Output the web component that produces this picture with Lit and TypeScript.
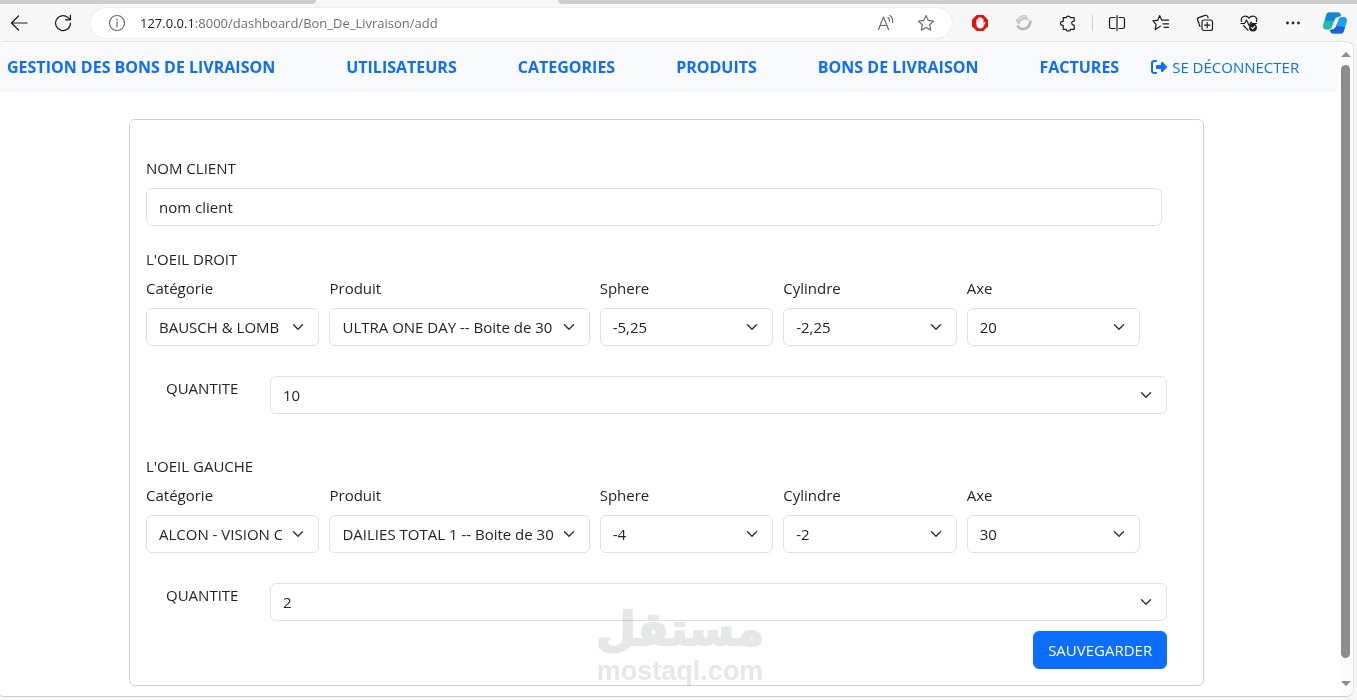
import { LitElement, html, css, svg } from "lit";
import { customElement } from "lit/decorators.js";

interface Field {
  id: string;
  label: string;
  value: string;
}

interface Eye {
  id: string;
  title: string;
  fields: Field[];
  quantity: string;
}

const LINKS = ["UTILISATEURS", "CATEGORIES", "PRODUITS", "BONS DE LIVRAISON", "FACTURES"];

const EYES: Eye[] = [
  {
    id: "droit",
    title: "L'OEIL DROIT",
    fields: [
      { id: "categorie", label: "Catégorie", value: "BAUSCH & LOMB" },
      { id: "produit", label: "Produit", value: "ULTRA ONE DAY -- Boite de 30" },
      { id: "sphere", label: "Sphere", value: "-5,25" },
      { id: "cylindre", label: "Cylindre", value: "-2,25" },
      { id: "axe", label: "Axe", value: "20" },
    ],
    quantity: "10",
  },
  {
    id: "gauche",
    title: "L'OEIL GAUCHE",
    fields: [
      { id: "categorie", label: "Catégorie", value: "ALCON - VISION CARE" },
      { id: "produit", label: "Produit", value: "DAILIES TOTAL 1 -- Boite de 30" },
      { id: "sphere", label: "Sphere", value: "-4" },
      { id: "cylindre", label: "Cylindre", value: "-2" },
      { id: "axe", label: "Axe", value: "30" },
    ],
    quantity: "2",
  },
];

const icons = {
  back: svg`<path d="M18 10H2.5M9.5 3L2.5 10l7 7"/>`,
  reload: svg`<path d="M17.5 10.2A7.5 7.5 0 1 1 14.8 4.4L17.3 6.6M17.4 2v4.8h-4.8"/>`,
  info: svg`<circle cx="10" cy="10" r="7.5"/><path d="M10 9v5M10 6v1.2"/>`,
  aloud: svg`<path d="M2.5 16.5L7.5 4l5 12.5M4.2 12.5h6.6M12 4.5a4.5 4.5 0 0 1 1.6 4M14 2.5a7.5 7.5 0 0 1 2.6 7"/>`,
  star: svg`<path d="M10 2.5l2.3 4.9 5.3.7-3.9 3.7 1 5.3-4.7-2.6-4.7 2.6 1-5.3-3.9-3.7 5.3-.7z"/>`,
  puzzle: svg`<path d="M5.200 4.600h3a2.200 2.200 0 0 1 4.200 0h3.800v3.600c-3.200-.5-3.400 4.200 0 3.900v4.300h-3.700c0 2-4.300 2-4.300 0h-3v-4c-3.700.2-3.700-4.200 0-4z"/>`,
  split: svg`<path d="M8 4.5H4.2a1.7 1.7 0 0 0-1.7 1.7v7.6c0 1 .7 1.7 1.7 1.7H8M12 4.5h3.8c1 0 1.7.7 1.7 1.7v7.6c0 1-.7 1.7-1.7 1.7H12M10 2.5v15"/>`,
  favs: svg`<path d="M9.500 13.300L8.200 14l-4 2.600.9-5.200L2 7.900l4.800-.7L8.600 2.600l2.200 4.600h6.700M12 10.800h5.500M13 14.400h4.500"/>`,
  collections: svg`<rect x="7" y="7" width="10.5" height="10.5" rx="2"/><path d="M12.2 9.6v5.2M9.6 12.2h5.2M5 13.5L2.7 7.2a2 2 0 0 1 1-2.6l6.4-2.2c1-.4 2.1.1 2.5 1.100l.5 1.200"/>`,
  heart: svg`<path d="M2.600 8.500C1 4 6.500 1 10 5 13.500 1 19 4 17.400 8.500M2 10.500h3.500L7.500 7l2.600 5.500 2-3.500 1 1.500h4.500M4.500 12.500l4.500 4.700"/><circle cx="14" cy="14.600" r="3.300" fill="#222"/><path d="M12.500 14.700l1.100 1.100 2.100-2.300" stroke="#f7f7f7"/>`,
};

const glyph = (shape: unknown) =>
  html`<svg class="glyph" viewBox="0 0 20 20" aria-hidden="true">${shape}</svg>`;

@customElement("browser-toolbar")
export class BrowserToolbar extends LitElement {
  static styles = css`
    :host {
      display: block;
      background: #f7f7f7;
      font-family: "Open Sans", "Noto Sans", sans-serif;
      color: #1b1b1b;
    }
    .tabs {
      display: grid;
      grid-template-columns: 316px 242px 1fr;
      height: 4px;
    }
    .tab {
      background: #cdcdcd;
    }
    .tab-left {
      border-bottom-right-radius: 4px;
    }
    .tab-right {
      grid-column: 3;
      border-bottom-left-radius: 4px;
    }
    .bar {
      display: flex;
      align-items: center;
      height: 37px;
      box-sizing: border-box;
      padding-right: 2px;
    }
    .cell {
      display: flex;
      align-items: center;
      justify-content: center;
      width: 44px;
      height: 30px;
      padding: 0;
      border: 0;
      background: none;
      flex: none;
      color: inherit;
    }
    .edge {
      width: 40px;
    }
    .first {
      width: 38px;
      margin-right: 3px;
    }
    .inner {
      width: 40px;
      color: #6b6b6b;
    }
    .glyph {
      width: 20px;
      height: 20px;
      fill: none;
      stroke: currentColor;
      stroke-width: 1.2;
      stroke-linejoin: round;
      stroke-linecap: round;
    }
    .address {
      flex: 1;
      min-width: 0;
      display: flex;
      align-items: center;
      height: 30px;
      margin: 0 6px;
      padding: 0 6px;
      border-radius: 15px;
      background: #fff;
      box-shadow: 0 0 2px #ddd;
      box-sizing: border-box;
    }
    .url {
      flex: 1;
      min-width: 0;
      padding-left: 3px;
      overflow: hidden;
      white-space: nowrap;
      font-size: 13px;
      line-height: 20px;
      color: #6f6f6f;
    }
    .host {
      color: #1b1b1b;
    }
    .divider {
      width: 1px;
      height: 16px;
      margin: 0 2px;
      background: #cfcfcf;
    }
    .color {
      width: 20px;
      height: 20px;
    }
    .copilot {
      width: 26px;
      height: 24px;
    }
  `;

  render() {
    return html`
      <div class="tabs"><div class="tab tab-left"></div><div class="tab tab-right"></div></div>
      <div class="bar">
        <button class="cell first" aria-label="Retour">${glyph(icons.back)}</button>
        <button class="cell" aria-label="Actualiser">${glyph(icons.reload)}</button>
        <div class="address">
          <button class="cell inner" aria-label="Informations">${glyph(icons.info)}</button>
          <div class="url"><span class="host">127.0.0.1</span>:8000/dashboard/Bon_De_Livraison/add</div>
          <button class="cell inner" aria-label="Lecture">${glyph(icons.aloud)}</button>
          <button class="cell inner" aria-label="Favori">${glyph(icons.star)}</button>
        </div>
        <button class="cell" aria-label="Bloqueur">
          <svg class="color" viewBox="0 0 20 20">
            <path d="M6.700 2h6.600L18 6.700v6.600L13.300 18H6.700L2 13.300V6.700z" fill="#e1140c" />
            <path d="M7.200 10.500V7M9 10V5.200M10.900 10V5M12.600 10.500V6.400" stroke="#fff" stroke-width="1.700" stroke-linecap="round" />
            <path d="M6.400 9.500h7v1l1-1.300c.7-.5 1.300.1.900.8l-2.100 3.900c-1.400 2.200-4.800 2-6 .2-.9-1.400-.8-3.100-.8-4.600z" fill="#fff" />
          </svg>
        </button>
        <button class="cell" aria-label="Extension">
          <svg class="color" viewBox="0 0 20 20" fill="none">
            <path d="M2.500 9C3 4.500 8 1.500 13 3M4 10.500C4 6.500 8.500 3.800 13 4.600" stroke="#c3c7c8" stroke-width="1.300" />
            <path d="M5 11c0-4 5-6.500 9.500-4.500" stroke="#c3c7c8" stroke-width="1.600" />
            <path d="M3.500 12.500c2.500 5.500 12.500 5 13-5" stroke="#b4b9ba" stroke-width="2.600" />
          </svg>
        </button>
        <button class="cell" aria-label="Extensions">${glyph(icons.puzzle)}</button>
        <div class="divider"></div>
        <button class="cell" aria-label="Écran partagé">${glyph(icons.split)}</button>
        <button class="cell" aria-label="Favoris">${glyph(icons.favs)}</button>
        <button class="cell" aria-label="Collections">${glyph(icons.collections)}</button>
        <button class="cell" aria-label="Performances">${glyph(icons.heart)}</button>
        <button class="cell" aria-label="Plus">
          <svg class="color" viewBox="0 0 20 20" fill="#222">
            <circle cx="4.500" cy="10" r="1.400" /><circle cx="10" cy="10" r="1.400" /><circle cx="15.500" cy="10" r="1.400" />
          </svg>
        </button>
        <button class="cell edge" aria-label="Copilot">
          <svg class="copilot" viewBox="0 0 26 24">
            <path d="M7 1.500h9c2 0 2.500 1.500 3 3.500l-5 2-4 9c-.8 2-2 2.500-4 2.500H4c-3 0-3.500-3-2.500-6L4 4.500c.5-2 1.500-3 3-3z" fill="#2ab7b0" />
            <path d="M7 1.500h9c2 0 2.500 1.500 3 3.500l-5 1-2 4H3l1.200-5.500c.5-2 1.300-3 2.800-3z" fill="#1684dc" />
            <path d="M19 22.500h-8c-2 0-2.500-1.500-3-3.500l4-1 4-9c.8-2 2-3 4-3h2c3 0 3.500 3 2.500 6L22 19.500c-.5 2-1.500 3-3 3z" fill="#18a1f4" />
            <path d="M19 22.500h-8c-2 0-2.500-1.500-3-3.500l4-1 1.500-3 9.500 1-1 3.500c-.5 2-1.500 3-3 3z" fill="#1b5fdc" />
            <path d="M13.500 7.500H17L13 17H9.500z" fill="#fff" />
          </svg>
        </button>
      </div>
    `;
  }
}

@customElement("delivery-form")
export class DeliveryForm extends LitElement {
  static styles = css`
    :host {
      display: block;
      font-family: "Open Sans", "Noto Sans", sans-serif;
      font-size: 15px;
      line-height: 24px;
      color: #212529;
    }
    .card {
      border: 1px solid #cfd0d1;
      border-radius: 6px;
      padding: 36px 16px 16px;
      background: #fff;
    }
    .label {
      display: block;
      margin-bottom: 8px;
    }
    .client {
      margin-right: 25px;
      margin-bottom: 21px;
    }
    .control {
      display: block;
      width: 100%;
      min-width: 0;
      height: 38px;
      box-sizing: border-box;
      margin: 0;
      padding: 6px 12px;
      border: 1px solid #dee2e6;
      border-radius: 6px;
      background-color: #fff;
      color: inherit;
      font: inherit;
    }
    .select {
      appearance: none;
      padding-right: 36px;
      background-image: url("data:image/svg+xml,%3Csvg xmlns='http://www.w3.org/2000/svg' viewBox='0 0 16 16'%3E%3Cpath fill='none' stroke='%23343a40' stroke-linecap='round' stroke-linejoin='round' stroke-width='2' d='m2 5 6 6 6-6'/%3E%3C/svg%3E");
      background-repeat: no-repeat;
      background-position: right 12px center;
      background-size: 16px 12px;
    }
    .title {
      margin: 0 0 5px;
    }
    .fields {
      display: grid;
      grid-template-columns: 2fr 3fr 2fr 2fr 2fr;
      gap: 10px;
      margin: 0 47px 30px 0;
    }
    .field {
      min-width: 0;
    }
    .quantity {
      display: grid;
      grid-template-columns: 104px 1fr;
      margin: 0 20px 40px;
    }
    .quantity-last {
      margin-bottom: 10px;
    }
    .actions {
      display: flex;
      justify-content: flex-end;
      margin-right: 20px;
    }
    .save {
      height: 38px;
      padding: 6px 14px;
      border: 1px solid #0d6efd;
      border-radius: 6px;
      background: #0d6efd;
      color: #fff;
      font: inherit;
    }
  `;

  private renderEye(eye: Eye, last: boolean) {
    return html`
      <section aria-labelledby="titre-${eye.id}">
        <p class="title" id="titre-${eye.id}">${eye.title}</p>
        <div class="fields">
          ${eye.fields.map(
            (f) => html`
              <div class="field">
                <label class="label" for="${f.id}-${eye.id}">${f.label}</label>
                <select class="control select" id="${f.id}-${eye.id}">
                  <option>${f.value}</option>
                </select>
              </div>
            `
          )}
        </div>
        <div class="quantity ${last ? "quantity-last" : ""}">
          <label for="quantite-${eye.id}">QUANTITE</label>
          <select class="control select" id="quantite-${eye.id}">
            <option>${eye.quantity}</option>
          </select>
        </div>
      </section>
    `;
  }

  render() {
    return html`
      <form class="card" @submit=${(e: Event) => e.preventDefault()}>
        <div class="client">
          <label class="label" for="client">NOM CLIENT</label>
          <input class="control" id="client" type="text" value="nom client" />
        </div>
        ${EYES.map((eye, i) => this.renderEye(eye, i === EYES.length - 1))}
        <div class="actions"><button class="save" type="submit">SAUVEGARDER</button></div>
      </form>
    `;
  }
}

@customElement("app-root")
export class AppRoot extends LitElement {
  static styles = css`
    :host {
      display: block;
      min-height: 100vh;
      background: #f7f7f7;
      font-family: "Open Sans", "Noto Sans", sans-serif;
      font-size: 15px;
      line-height: 24px;
    }
    .window {
      display: flex;
      margin-right: 3px;
      border: 1px solid #e2e2e2;
      border-left: 0;
      border-bottom-color: #cccccc;
      border-radius: 4px 8px 8px 4px;
      background: #fff;
      overflow: hidden;
    }
    .page {
      flex: 1;
      min-width: 0;
      position: relative;
    }
    .navbar {
      display: flex;
      align-items: center;
      height: 50px;
      padding-left: 7px;
      background: #f8f9fb;
      white-space: nowrap;
    }
    .link {
      color: #0d6efd;
      text-decoration: none;
      font-size: 16px;
      font-weight: 700;
      margin-right: 61px;
    }
    .brand {
      margin-right: 71px;
    }
    .last {
      margin-right: 32px;
    }
    .logout {
      display: flex;
      align-items: center;
      gap: 5px;
      color: #0d6efd;
      text-decoration: none;
    }
    .logout-icon {
      width: 16px;
      height: 16px;
      fill: currentColor;
    }
    .form {
      margin: 27px 10% 10px 129px;
    }
    .scrollbar {
      display: flex;
      flex-direction: column;
      align-items: center;
      gap: 8px;
      width: 15px;
      padding: 10px 0;
      background: #fcfcfc;
      box-sizing: border-box;
    }
    .arrow {
      width: 10px;
      height: 5px;
      fill: #8b8b8b;
    }
    .thumb {
      flex: 1;
      width: 9px;
      border-radius: 5px;
      background: #8b8b8b;
    }
    .arrow-down {
      margin-top: 15px;
    }
    .watermark {
      position: absolute;
      left: 596px;
      bottom: 10px;
      display: flex;
      flex-direction: column;
      align-items: center;
      color: #e6e7e7;
      mix-blend-mode: multiply;
      pointer-events: none;
      font-weight: 700;
      white-space: nowrap;
    }
    .arabic {
      font-family: "DejaVu Sans", sans-serif;
      font-size: 46px;
      line-height: 54px;
      -webkit-text-stroke: 2px #e6e7e7;
    }
    .latin {
      font-family: "Liberation Sans", Arial, sans-serif;
      font-size: 27px;
      line-height: 30px;
    }
  `;

  render() {
    return html`
      <browser-toolbar></browser-toolbar>
      <div class="window">
        <div class="page">
          <nav class="navbar">
            <a class="link brand" href="#">GESTION DES BONS DE LIVRAISON</a>
            ${LINKS.map(
              (name, i) => html`<a class="link ${i === LINKS.length - 1 ? "last" : ""}" href="#">${name}</a>`
            )}
            <a class="logout" href="#">
              <svg class="logout-icon" viewBox="0 0 512 512" aria-hidden="true">
                <path d="M377.900 105.900L500.700 228.700c7.200 7.200 11.300 17.100 11.300 27.300s-4.100 20.100-11.300 27.300L377.900 406.100c-6.400 6.400-15 9.900-24 9.900c-18.700 0-33.900-15.200-33.900-33.900l0-62.100-128 0c-17.700 0-32-14.300-32-32l0-64c0-17.700 14.300-32 32-32l128 0 0-62.100c0-18.700 15.200-33.900 33.900-33.900c9 0 17.600 3.600 24 9.900zM160 96L96 96c-17.700 0-32 14.300-32 32l0 256c0 17.700 14.300 32 32 32l64 0c17.700 0 32 14.300 32 32s-14.300 32-32 32l-64 0c-53 0-96-43-96-96L0 128C0 75 43 32 96 32l64 0c17.700 0 32 14.300 32 32s-14.300 32-32 32z" />
              </svg>
              <span>SE DÉCONNECTER</span>
            </a>
          </nav>
          <delivery-form class="form"></delivery-form>
          <div class="watermark">
            <div class="arabic" lang="ar" dir="rtl">مستقل</div>
            <div class="latin">mostaql.com</div>
          </div>
        </div>
        <div class="scrollbar">
          <svg class="arrow" viewBox="0 0 10 5"><path d="M0 5L5 0l5 5z" /></svg>
          <div class="thumb"></div>
          <svg class="arrow arrow-down" viewBox="0 0 10 5"><path d="M0 0h10L5 5z" /></svg>
        </div>
      </div>
    `;
  }
}
